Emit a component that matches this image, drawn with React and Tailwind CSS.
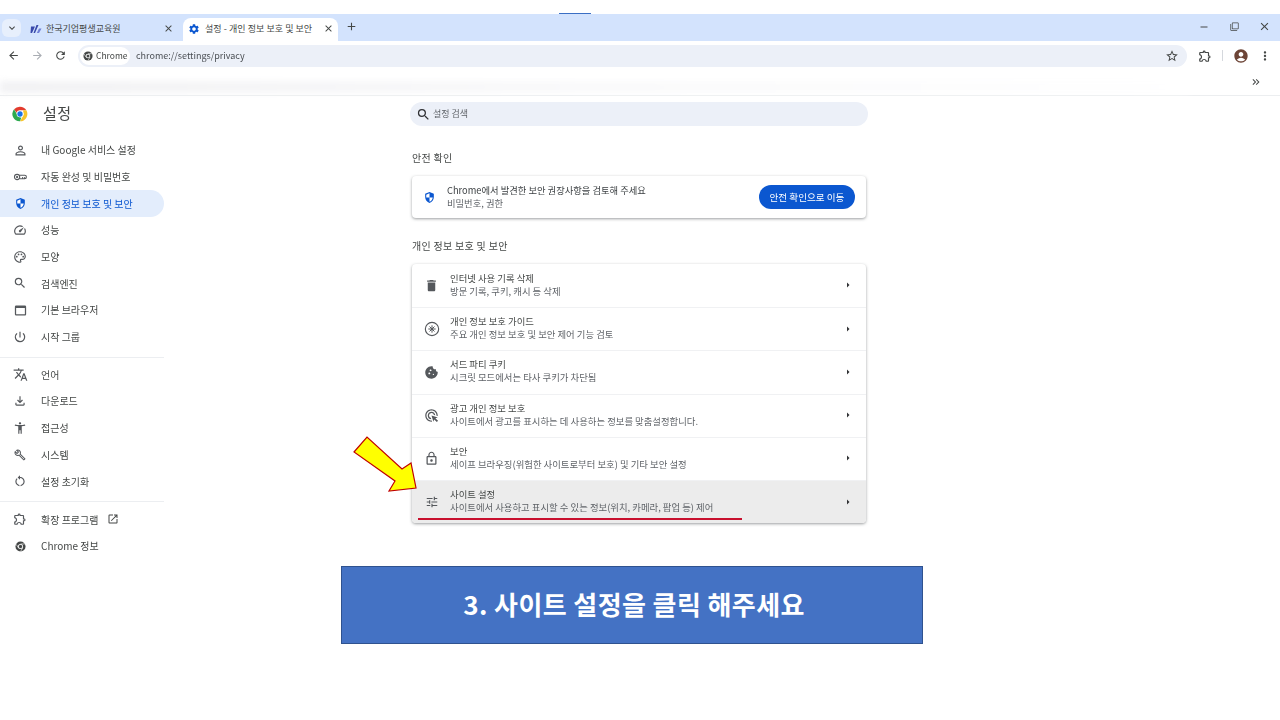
import React from "react";
import {
  MdKeyboardArrowDown,
  MdClose,
  MdAdd,
  MdSettings,
  MdArrowBack,
  MdArrowForward,
  MdRefresh,
  MdStarBorder,
  MdOutlineExtension,
  MdMoreVert,
  MdAccountCircle,
  MdRemove,
  MdFilterNone,
  MdKeyboardDoubleArrowRight,
  MdPersonOutline,
  MdOutlineSpeed,
  MdOutlinePalette,
  MdSearch,
  MdOutlineWebAsset,
  MdPowerSettingsNew,
  MdTranslate,
  MdOutlineFileDownload,
  MdAccessibilityNew,
  MdOutlineBuild,
  MdRestartAlt,
  MdOpenInNew,
  MdDelete,
  MdCookie,
  MdOutlineAdsClick,
  MdLockOutline,
  MdTune,
  MdArrowRight,
} from "react-icons/md";

const font = "font-['Noto_Sans_CJK_KR','Noto_Sans',sans-serif]";

function ChromeLogo({ size = 16 }) {
  return (
    <svg width={size} height={size} viewBox="0 0 24 24">
      <path d="M12 1a11 11 0 0 1 9.53 5.5H12a5.5 5.5 0 0 0-5.2 3.7L3.1 5A11 11 0 0 1 12 1z" fill="#e33b2e" />
      <path d="M21.53 6.5A11 11 0 0 1 12 23l4.76-8.25A5.5 5.5 0 0 0 16.8 9l-.0-2.5z" fill="#f8c52c" />
      <path d="M12 23A11 11 0 0 1 3.1 5l4.76 8.25A5.5 5.5 0 0 0 14 17.1L12 23z" fill="#2da94f" />
      <circle cx="12" cy="12" r="5" fill="#fff" />
      <circle cx="12" cy="12" r="4" fill="#1a73e8" />
    </svg>
  );
}

function ChromeMono({ size = 12 }) {
  return (
    <svg width={size} height={size} viewBox="0 0 24 24">
      <circle cx="12" cy="12" r="11" fill="#444746" />
      <circle cx="12" cy="12" r="5.5" fill="#fff" />
      <circle cx="12" cy="12" r="3.6" fill="#444746" />
      <path d="M12 6.5h9M7.2 14.7 3 7.5M16.8 14.7 12 23" stroke="#fff" strokeWidth="1.4" fill="none" />
    </svg>
  );
}

function ShieldIcon({ size = 14, color = "#0b57d0" }) {
  return (
    <svg width={size} height={size} viewBox="0 0 24 24">
      <path d="M12 2 4 5v6c0 5 3.4 9.6 8 11 4.6-1.400 8-6 8-11V5l-8-3z" fill={color} />
      <path d="M12 4.300V12H6V6.900l6-2.600zM12 12h6c-.5 3.700-3 7-6 8v-8z" fill="#fff" />
    </svg>
  );
}

function KeyIcon({ size = 14 }) {
  return (
    <svg width={size} height={size} viewBox="0 0 24 24" fill="none" stroke="#55585c" strokeWidth="1.800">
      <circle cx="7" cy="12" r="4.500" />
      <circle cx="7" cy="12" r="1" fill="#55585c" />
      <path d="M11.500 9H20a3 3 0 0 1 0 6h-8.500M16.500 15v-3M20 15v-3" />
    </svg>
  );
}

function GuideIcon({ size = 16 }) {
  return (
    <svg width={size} height={size} viewBox="0 0 24 24" fill="none" stroke="#55585c" strokeWidth="1.700">
      <circle cx="12" cy="12" r="10" />
      <path d="M12 6.500v11M6.500 12h11M8.300 8.300l7.400 7.400M15.700 8.300l-7.400 7.400" strokeWidth="1.500" />
    </svg>
  );
}

function TabMark() {
  return (
    <svg width="12" height="12" viewBox="0 0 12 12">
      <path d="M1 3.500h4L2 10h-1.500z" fill="#3949ab" />
      <path d="M6.500 2h2L5 10H3.500z" fill="#3949ab" />
      <path d="M9 5.500h2.500L9 10H6.800z" fill="#6f7fd6" />
    </svg>
  );
}

const group1 = [
  { icon: <MdPersonOutline size={15} />, label: "내 Google 서비스 설정" },
  { icon: <KeyIcon />, label: "자동 완성 및 비밀번호" },
  { icon: <ShieldIcon size={13} />, label: "개인 정보 보호 및 보안", active: true },
  { icon: <MdOutlineSpeed size={14} />, label: "성능" },
  { icon: <MdOutlinePalette size={14} />, label: "모양" },
  { icon: <MdSearch size={14} />, label: "검색엔진" },
  { icon: <MdOutlineWebAsset size={15} />, label: "기본 브라우저" },
  { icon: <MdPowerSettingsNew size={14} />, label: "시작 그룹" },
];

const group2 = [
  { icon: <MdTranslate size={15} />, label: "언어" },
  { icon: <MdOutlineFileDownload size={14} />, label: "다운로드" },
  { icon: <MdAccessibilityNew size={14} />, label: "접근성" },
  { icon: <MdOutlineBuild size={12} />, label: "시스템" },
  { icon: <MdRestartAlt size={14} />, label: "설정 초기화" },
];

const rows = [
  { icon: <MdDelete size={15} />, title: "인터넷 사용 기록 삭제", sub: "방문 기록, 쿠키, 캐시 등 삭제" },
  { icon: <GuideIcon />, title: "개인 정보 보호 가이드", sub: "주요 개인 정보 보호 및 보안 제어 기능 검토" },
  { icon: <MdCookie size={15} />, title: "서드 파티 쿠키", sub: "시크릿 모드에서는 타사 쿠키가 차단됨" },
  { icon: <MdOutlineAdsClick size={15} />, title: "광고 개인 정보 보호", sub: "사이트에서 광고를 표시하는 데 사용하는 정보를 맞춤설정합니다." },
  { icon: <MdLockOutline size={15} />, title: "보안", sub: "세이프 브라우징(위험한 사이트로부터 보호) 및 기타 보안 설정" },
  { icon: <MdTune size={14} />, title: "사이트 설정", sub: "사이트에서 사용하고 표시할 수 있는 정보(위치, 카메라, 팝업 등) 제어", hover: true },
];

function NavItem({ icon, label, active, children }) {
  return (
    <div
      className={`h-[26.7px] flex items-center rounded-r-full text-[10px] ${
        active ? "bg-[#e3edfc] text-[#0b57d0]" : "text-[#444746]"
      }`}
    >
      <span className="w-[41px] flex justify-center pr-[1px] text-[#55585c]">{icon}</span>
      <span className="-mt-[0.5px]">{label}</span>
      {children}
    </div>
  );
}

function App() {
  return (
    <div className={`relative w-[1280px] h-[720px] overflow-hidden bg-white ${font}`}>
      <div className="h-full flex flex-col blur-[0.35px]">
        {/* top edge */}
        <div className="h-[14px] flex justify-center">
          <div className="w-[32px] h-[1px] mt-[13px] ml-[-130px] bg-[#3b6fc4]" />
        </div>

        {/* tab strip */}
        <div className="h-[27px] bg-[#d3e3fd] flex items-end pl-[2px] text-[#444746]">
          <div className="w-[19px] h-[18px] mb-[4px] rounded-[6px] bg-[#e7effc] flex items-center justify-center">
            <MdKeyboardArrowDown size={12} />
          </div>
          <div className="w-[155px] h-[23px] ml-[4px] flex items-center pl-[5px] pr-[6px] pb-[2px] text-[9px]">
            <TabMark />
            <span className="ml-[4px] flex-1">한국기업평생교육원</span>
            <MdClose size={11} />
          </div>
          <div className="w-[155px] h-[23px] ml-[3px] flex items-center pl-[5px] pr-[4px] pb-[2px] bg-white rounded-t-[8px] text-[9px] tracking-[0.05px]">
            <MdSettings size={12} className="text-[#0b57d0]" />
            <span className="ml-[5px] flex-1">설정 - 개인 정보 보호 및 보안</span>
            <MdClose size={11} />
          </div>
          <MdAdd size={13} className="ml-[7px] mb-[8px]" />
          <div className="ml-auto flex items-center mb-[8px]">
            <MdRemove size={12} />
            <MdFilterNone size={9} className="ml-[20px]" />
            <MdClose size={13} className="ml-[19px] mr-[9px]" />
          </div>
        </div>

        {/* toolbar */}
        <div className="h-[27px] pt-[2px] bg-white rounded-tr-[8px] flex items-center pl-[7px] text-[#444746]">
          <MdArrowBack size={13} />
          <MdArrowForward size={13} className="ml-[11px] text-[#a9adb3]" />
          <MdRefresh size={13} className="ml-[10px]" />
          <div className="ml-[11px] w-[1109px] h-[22px] rounded-full bg-[#ecf0f8] flex items-center pl-[2px] pr-[8px]">
            <div className="h-[18px] w-[50px] rounded-full bg-white flex items-center pl-[3px] gap-[3px] text-[8.500px]">
              <ChromeMono size={10} />
              <span>Chrome</span>
            </div>
            <span className="ml-[6px] text-[9px] text-[#4b4f54]">chrome://settings/privacy</span>
            <MdStarBorder size={14} className="ml-auto" />
          </div>
          <MdOutlineExtension size={14} className="ml-[11px]" />
          <div className="w-[1px] h-[11px] bg-[#d5d8dd] ml-[10px]" />
          <MdAccountCircle size={16} className="ml-[10px] text-[#6d4537]" />
          <MdMoreVert size={14} className="ml-[9px]" />
        </div>

        {/* bookmark bar */}
        <div className="relative h-[28px] flex items-center justify-end pr-[18px] border-b border-[#eceef0] text-[#444746]">
          <div className="absolute left-0 bottom-[2px] w-[1190px] h-[12px] bg-gradient-to-r from-[#f2f2f4] via-[#fafafb] to-white blur-[3px]" />
          <MdKeyboardDoubleArrowRight size={12} className="relative" />
        </div>

        {/* page */}
        <div className="flex flex-1">
          <aside className="w-[164px] shrink-0">
            <div className="h-[36px] flex items-center pl-[12px]">
              <ChromeLogo size={16} />
              <span className="ml-[15px] -mt-[2px] text-[15px] tracking-[0.4px] text-[#444746]">설정</span>
            </div>
            <div className="mt-[4.700px]">
              {group1.map((item) => (
                <NavItem key={item.label} {...item} />
              ))}
            </div>
            <div className="h-[1px] bg-[#eceef1] mt-[6.400px] mb-[3.600px]" />
            {group2.map((item) => (
              <NavItem key={item.label} {...item} />
            ))}
            <div className="h-[1px] bg-[#eceef1] mt-[6.400px] mb-[4px]" />
            <NavItem icon={<MdOutlineExtension size={14} />} label="확장 프로그램">
              <MdOpenInNew size={12} className="ml-[9px]" />
            </NavItem>
            <NavItem icon={<ChromeMono size={11} />} label="Chrome 정보" />
          </aside>

          <main className="ml-[246px] w-[458px] pt-[6px] text-[#444746]">
            <div className="h-[24px] rounded-full bg-[#ecf0f8] flex items-center pl-[6px] text-[9px] text-[#5f6368]">
              <MdSearch size={15} className="text-[#303134]" />
              <span className="ml-[2px]">설정 검색</span>
            </div>

            <h2 className="mt-[25px] ml-[2px] text-[10px] leading-[14px] font-normal tracking-[0.3px]">안전 확인</h2>
            <div className="mt-[11px] mx-[2px] h-[42px] rounded-[4px] bg-white shadow-[0_1px_3px_rgba(60,64,67,0.5)] flex items-center pl-[11px] pr-[11px]">
              <ShieldIcon size={13} />
              <div className="ml-[11px] flex-1">
                <p className="text-[9.300px] leading-[13px] text-[#3c4043]">Chrome에서 발견한 보안 권장사항을 검토해 주세요</p>
                <p className="text-[9.300px] leading-[13px] text-[#5f6368]">비밀번호, 권한</p>
              </div>
              <button className="h-[24px] w-[96px] rounded-full bg-[#0b57d0] text-white text-[9.600px]">안전 확인으로 이동</button>
            </div>

            <h2 className="mt-[21px] ml-[2px] text-[10px] leading-[14px] font-normal tracking-[0.3px]">개인 정보 보호 및 보안</h2>
            <div className="mt-[11px] mx-[2px] rounded-[4px] bg-white shadow-[0_1px_3px_rgba(60,64,67,0.5)] overflow-hidden">
              {rows.map((row, i) => (
                <div
                  key={row.title}
                  className={`h-[43.200px] flex items-center pr-[12px] ${i > 0 ? "border-t border-[#f0f1f3]" : ""} ${
                    row.hover ? "bg-[#ececec]" : ""
                  }`}
                >
                  <span className="w-[38px] pl-[1px] flex justify-center text-[#55585c]">{row.icon}</span>
                  <div className="flex-1 -mt-[2px]">
                    <p className="text-[9.400px] leading-[13px] text-[#444746]">{row.title}</p>
                    <p className="text-[9.400px] leading-[13px] text-[#5f6368]">{row.sub}</p>
                  </div>
                  <MdArrowRight size={12} className="text-[#303134] -mt-[1px]" />
                </div>
              ))}
            </div>
          </main>
        </div>
      </div>

      {/* caption */}
      <div className="absolute left-[341px] top-[566px] w-[582px] h-[78px] pb-[3px] pl-[4px] bg-[#4472c4] border border-[#2f528f] flex items-center justify-center text-white text-[26px] font-bold tracking-[0.4px]">
        3. 사이트 설정을 클릭 해주세요
      </div>

      {/* annotation: arrow + underline */}
      <svg className="absolute left-[350px] top-[432px]" width="76" height="66" viewBox="0 0 76 66">
        <path d="M4 20 17 5 52 37 61 31 66 56 39 59 45 49z" fill="#ffff00" stroke="#c00000" strokeWidth="1.200" />
      </svg>
      <div className="absolute left-[418px] top-[518px] w-[324px] h-[2px] bg-[#c8102e]" />
    </div>
  );
}

export default App;
